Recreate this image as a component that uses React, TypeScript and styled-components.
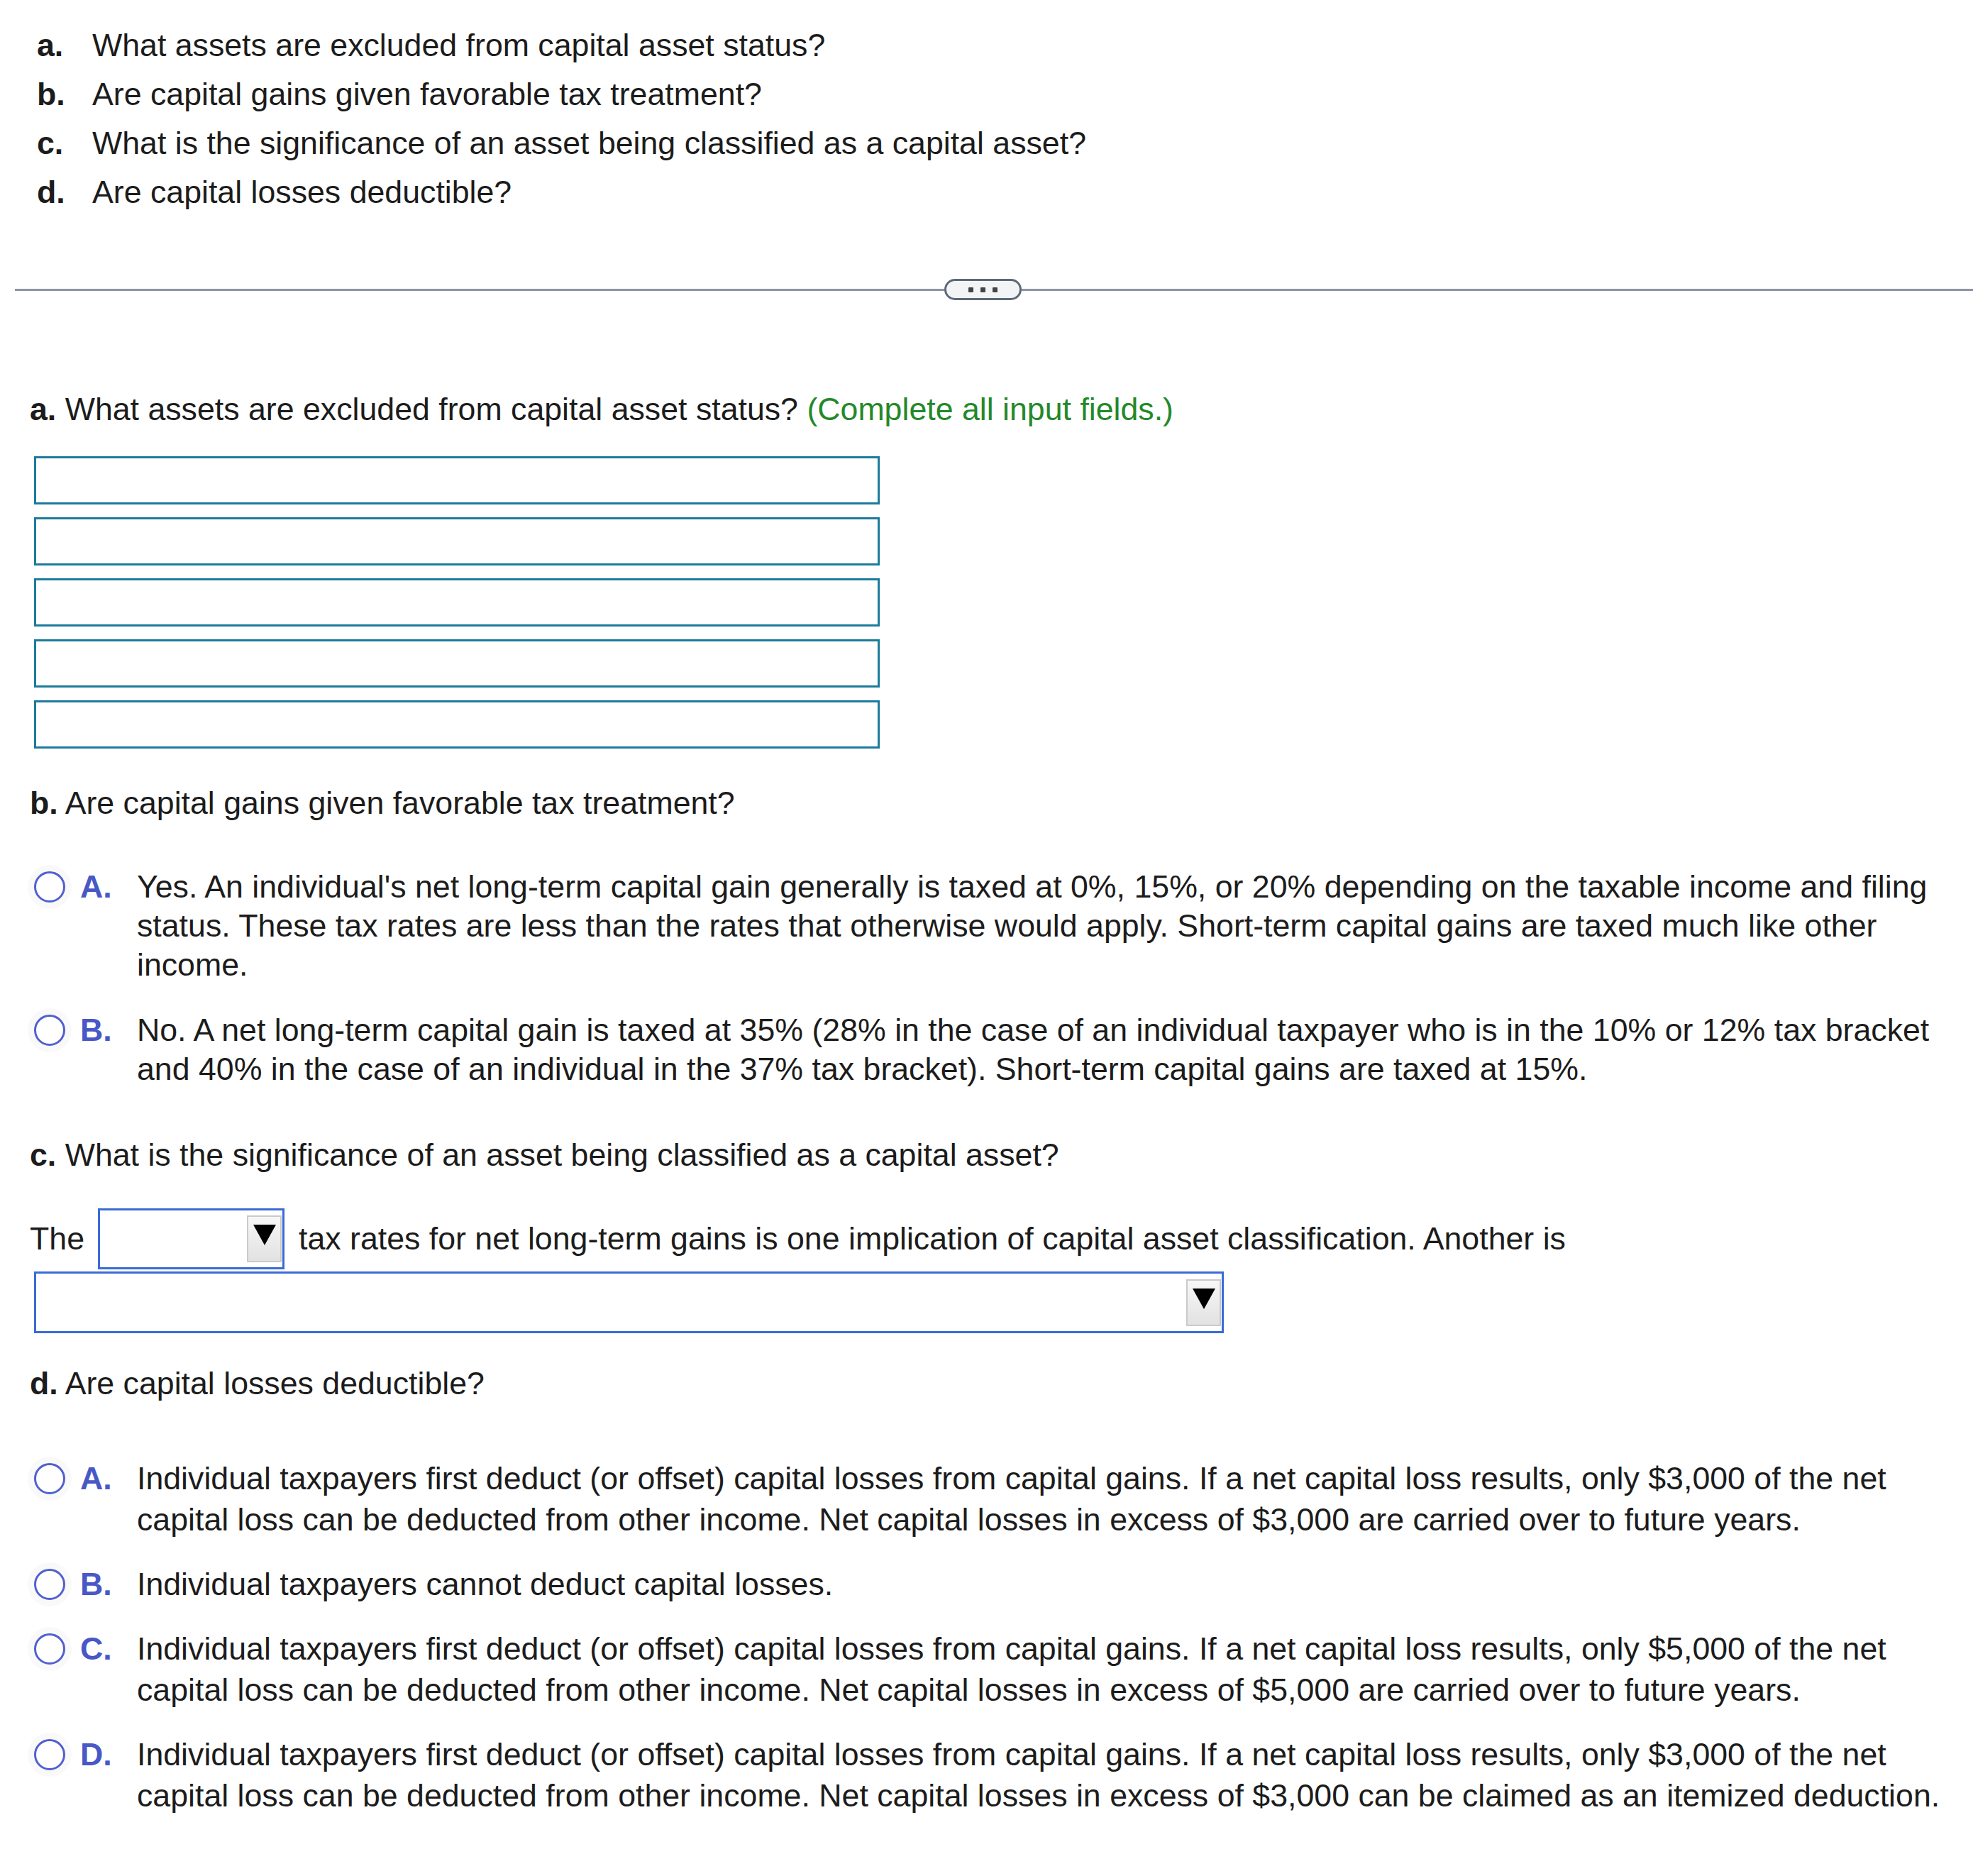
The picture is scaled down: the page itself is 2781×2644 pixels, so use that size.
import React from 'react';
import styled, { createGlobalStyle } from 'styled-components';

const GlobalStyle = createGlobalStyle`
  html, body {
    margin: 0;
    padding: 0;
    background: #ffffff;
  }

  body {
    font-family: "Liberation Sans", Arial, sans-serif;
    color: #1c1c1c;
  }
`;

const Page = styled.div`
  width: 2781px;
  min-height: 2644px;
  font-size: 44.7px;
`;

const Intro = styled.ol`
  list-style: none;
  margin: 0;
  padding: 29px 0 0 52px;
`;

const IntroItem = styled.li`
  display: flex;
  line-height: 69px;
`;

const IntroLabel = styled.span`
  width: 78px;
  flex: none;
  font-weight: bold;
`;

const Divider = styled.div`
  display: flex;
  align-items: center;
  height: 30px;
  margin: 88px 0 0 21px;
`;

const Rule = styled.div<{ $width?: number }>`
  height: 3px;
  background: #8c94a2;
  flex: ${({ $width }) => ($width ? 'none' : '1')};
  width: ${({ $width }) => ($width ? `${$width}px` : 'auto')};
`;

const Handle = styled.button`
  display: flex;
  align-items: center;
  justify-content: center;
  gap: 10px;
  width: 109px;
  height: 30px;
  padding: 0;
  box-sizing: border-box;
  border: 3px solid #5d6879;
  border-radius: 15px;
  background: #f3f4f6;
  cursor: pointer;

  span {
    width: 7px;
    height: 7px;
    border-radius: 1px;
    background: #444;
  }
`;

const Content = styled.div`
  padding: 126px 20px 0 42px;
`;

const Heading = styled.p<{ $gap?: number }>`
  margin: ${({ $gap = 0 }) => $gap}px 0 0;
  line-height: 55px;

  b {
    font-weight: bold;
  }
`;

const Hint = styled.span`
  color: #23892a;
`;

const Fields = styled.div`
  display: flex;
  flex-direction: column;
  gap: 18px;
  margin: 39px 0 0 6px;
`;

const TextField = styled.input`
  display: block;
  width: 1192px;
  height: 68px;
  box-sizing: border-box;
  border: 3px solid #1b7b9c;
  border-radius: 0;
  padding: 0 10px;
  font: inherit;
  outline: none;
`;

const Options = styled.div<{ $gap: number; $top: number; $lineHeight: number }>`
  display: flex;
  flex-direction: column;
  gap: ${({ $gap }) => $gap}px;
  margin: ${({ $top }) => $top}px 0 0 6px;
  line-height: ${({ $lineHeight }) => $lineHeight}px;
`;

const Option = styled.label`
  display: flex;
  align-items: flex-start;
  cursor: pointer;
`;

const RadioSlot = styled.span`
  display: flex;
  align-items: center;
  height: 1lh;
  flex: none;
`;

const Radio = styled.span`
  width: 44px;
  height: 44px;
  box-sizing: border-box;
  border: 3px solid #5160d0;
  border-radius: 50%;
  box-shadow: 0 0 0 9px rgba(0, 0, 0, 0.025);
`;

const Letter = styled.span`
  width: 80px;
  flex: none;
  margin-left: 21px;
  font-weight: bold;
  color: #4858c6;
`;

const OptionText = styled.span`
  flex: 1;
`;

const Sentence = styled.div`
  display: flex;
  align-items: center;
  margin-top: 48px;
  white-space: nowrap;
`;

const Select = styled.div<{ $width: number; $height: number }>`
  display: flex;
  justify-content: flex-end;
  align-items: center;
  width: ${({ $width }) => $width}px;
  height: ${({ $height }) => $height}px;
  box-sizing: border-box;
  border: 3px solid #3a6bd6;
  padding-right: 1px;
  background: #fff;
  flex: none;
`;

const InlineSelect = styled(Select)`
  margin: 0 20px 0 19px;
`;

const BlockSelect = styled(Select)`
  margin: 3px 0 0 6px;
`;

const SelectButton = styled.span`
  display: flex;
  justify-content: center;
  align-items: flex-start;
  width: 49px;
  height: 66px;
  box-sizing: border-box;
  padding-top: 11px;
  border: 2px solid #cacaca;
  background: linear-gradient(#f7f7f7, #e2e2e2);
`;

const Caret = () => (
  <svg width="32" height="29" viewBox="0 0 32 29">
    <polygon points="0,0 32,0 16,29" fill="#000" />
  </svg>
);

const Dropdown = ({ as: Box, width, height }: { as: typeof InlineSelect; width: number; height: number }) => (
  <Box $width={width} $height={height}>
    <SelectButton>
      <Caret />
    </SelectButton>
  </Box>
);

const intro = [
  ['a.', 'What assets are excluded from capital asset status?'],
  ['b.', 'Are capital gains given favorable tax treatment?'],
  ['c.', 'What is the significance of an asset being classified as a capital asset?'],
  ['d.', 'Are capital losses deductible?'],
];

const gainsOptions = [
  ['A.', "Yes. An individual's net long-term capital gain generally is taxed at 0%, 15%, or 20% depending on the taxable income and filing status. These tax rates are less than the rates that otherwise would apply. Short-term capital gains are taxed much like other income."],
  ['B.', 'No. A net long-term capital gain is taxed at 35% (28% in the case of an individual taxpayer who is in the 10% or 12% tax bracket and 40% in the case of an individual in the 37% tax bracket). Short-term capital gains are taxed at 15%.'],
];

const lossOptions = [
  ['A.', 'Individual taxpayers first deduct (or offset) capital losses from capital gains. If a net capital loss results, only $3,000 of the net capital loss can be deducted from other income. Net capital losses in excess of $3,000 are carried over to future years.'],
  ['B.', 'Individual taxpayers cannot deduct capital losses.'],
  ['C.', 'Individual taxpayers first deduct (or offset) capital losses from capital gains. If a net capital loss results, only $5,000 of the net capital loss can be deducted from other income. Net capital losses in excess of $5,000 are carried over to future years.'],
  ['D.', 'Individual taxpayers first deduct (or offset) capital losses from capital gains. If a net capital loss results, only $3,000 of the net capital loss can be deducted from other income. Net capital losses in excess of $3,000 can be claimed as an itemized deduction.'],
];

const OptionGroup = ({ items, gap, top, lineHeight }: { items: string[][]; gap: number; top: number; lineHeight: number }) => (
  <Options $gap={gap} $top={top} $lineHeight={lineHeight}>
    {items.map(([letter, text]) => (
      <Option key={letter}>
        <RadioSlot>
          <Radio />
        </RadioSlot>
        <Letter>{letter}</Letter>
        <OptionText>{text}</OptionText>
      </Option>
    ))}
  </Options>
);

const App = () => (
  <Page>
    <GlobalStyle />
    <Intro>
      {intro.map(([label, text]) => (
        <IntroItem key={label}>
          <IntroLabel>{label}</IntroLabel>
          <span>{text}</span>
        </IntroItem>
      ))}
    </Intro>

    <Divider>
      <Rule $width={1310} />
      <Handle type="button" aria-label="more">
        <span />
        <span />
        <span />
      </Handle>
      <Rule />
    </Divider>

    <Content>
      <Heading>
        <b>a.</b> What assets are excluded from capital asset status? <Hint>(Complete all input fields.)</Hint>
      </Heading>
      <Fields>
        {[0, 1, 2, 3, 4].map((i) => (
          <TextField key={i} type="text" />
        ))}
      </Fields>

      <Heading $gap={49}>
        <b>b.</b> Are capital gains given favorable tax treatment?
      </Heading>
      <OptionGroup items={gainsOptions} gap={37} top={63} lineHeight={55} />

      <Heading $gap={66}>
        <b>c.</b> What is the significance of an asset being classified as a capital asset?
      </Heading>
      <Sentence>
        <span>The</span>
        <Dropdown as={InlineSelect} width={263} height={86} />
        <span>tax rates for net long-term gains is one implication of capital asset classification. Another is</span>
      </Sentence>
      <Dropdown as={BlockSelect} width={1677} height={87} />

      <Heading $gap={43}>
        <b>d.</b> Are capital losses deductible?
      </Heading>
      <OptionGroup items={lossOptions} gap={33} top={78} lineHeight={58} />
    </Content>
  </Page>
);

export default App;
